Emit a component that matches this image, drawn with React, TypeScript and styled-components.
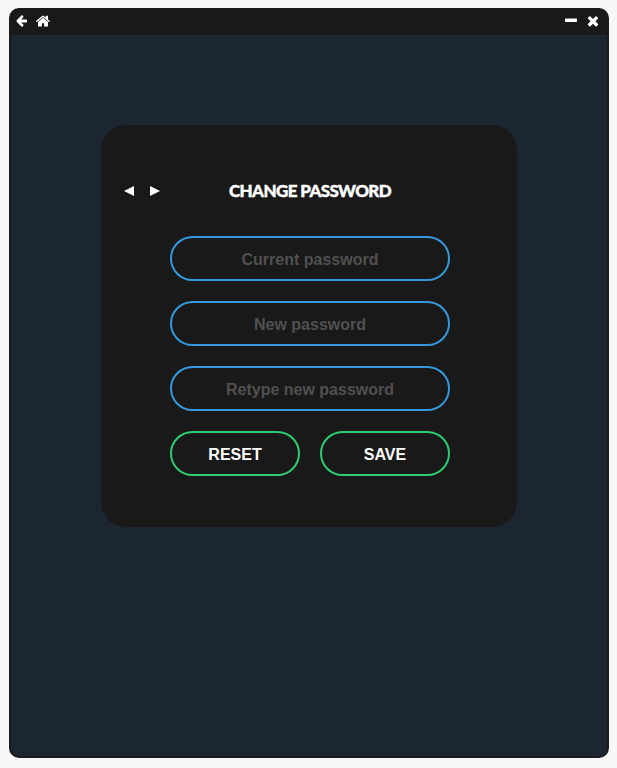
import React from 'react';
import styled, { createGlobalStyle } from 'styled-components';

const GlobalStyle = createGlobalStyle`
  * { box-sizing: border-box; }
  body { margin: 0; background: #f8f8f8; font-family: "Liberation Sans", Arial, sans-serif; }
`;

const Page = styled.div`
  height: 768px;
  padding: 8px 8px 10px 9px;
`;

const Window = styled.div`
  height: 750px;
  border: 2px solid #191919;
  border-radius: 10px;
  overflow: hidden;
  background: #1c2630;
`;

const TitleBar = styled.header`
  height: 25px;
  padding: 4px 8px 0 5px;
  display: flex;
  justify-content: space-between;
  background: #191919;
`;

const BarGroup = styled.div<{ $gap: number }>`
  display: flex;
  gap: ${(p) => p.$gap}px;
`;

const IconButton = styled.button`
  display: flex;
  height: 14px;
  padding: 0;
  border: 0;
  background: none;
  color: #fff;
  svg { display: block; fill: currentColor; }
`;

const Content = styled.main`
  display: flex;
  justify-content: center;
  padding-top: 90px;
`;

const Card = styled.form`
  width: 416px;
  height: 402px;
  padding-top: 52px;
  border-radius: 25px;
  background: #191919;
`;

const CardHeader = styled.div`
  display: flex;
  align-items: center;
  height: 28px;
  padding-left: 23px;
`;

const Arrows = styled.div`
  display: flex;
  gap: 16px;
  width: 105px;
`;

const Title = styled.h1`
  margin: 0;
  color: #fff;
  font: 900 17px/28px Lato, sans-serif;
  letter-spacing: -0.62px;
  -webkit-text-stroke: 0.4px #fff;
  white-space: nowrap;
`;

const Fields = styled.div`
  display: grid;
  grid-template-columns: 130px 130px;
  gap: 20px;
  margin: 31px 0 0 69px;
`;

const Field = styled.input`
  grid-column: span 2;
  height: 45px;
  padding: 2px 10px 0;
  border: 2px solid #3498db;
  border-radius: 24px;
  outline: none;
  background: none;
  color: #fff;
  font: bold 16px "Liberation Sans", Arial, sans-serif;
  text-align: center;
  &::placeholder { color: #505050; opacity: 1; }
`;

const ActionButton = styled.button`
  height: 45px;
  padding: 2px 0 0;
  border: 2px solid #2ecc71;
  border-radius: 24px;
  background: none;
  color: #fff;
  font: bold 16px "Liberation Sans", Arial, sans-serif;
`;

export default function App() {
  return (
    <>
      <GlobalStyle />
      <Page>
        <Window>
          <TitleBar>
            <BarGroup $gap={9}>
              <IconButton type="button" aria-label="Back">
                <svg width="11" height="14" viewBox="0 0 1536 1920" preserveAspectRatio="none">
                  <path d="M1536 896v128q0 53-32.5 90.5T1419 1152H715l293 294q38 36 38 90t-38 90l-75 76q-37 37-90 37-52 0-91-37L101 1050q-37-37-37-90 0-52 37-91l651-650q38-38 91-38 52 0 90 38l75 74q38 38 38 91t-38 91L715 768h704q52 0 84.5 37.5T1536 896z" />
                </svg>
              </IconButton>
              <IconButton type="button" aria-label="Home">
                <svg width="14" height="14" viewBox="90 60 1612 1640" preserveAspectRatio="none">
                  <path d="M1472 992v480q0 26-19 45t-45 19h-384v-384H768v384H384q-26 0-45-19t-19-45V992q0-1 .5-3t.5-3l575-474 575 474q1 2 1 6zm223-69l-62 74q-8 9-21 11h-3q-13 0-21-7L896 424l-692 577q-12 8-24 7-13-2-21-11l-62-74q-8-10-7-23.5t11-21.5l719-599q32-26 76-26t76 26l244 204V288q0-14 9-23t23-9h192q14 0 23 9t9 23v408l219 182q10 8 11 21.5t-7 23.5z" />
                </svg>
              </IconButton>
            </BarGroup>
            <BarGroup $gap={10}>
              <IconButton type="button" aria-label="Minimize">
                <svg width="12" height="14" viewBox="0 0 12 14">
                  <rect x="0" y="4.5" width="12" height="3.5" rx="0.7" />
                </svg>
              </IconButton>
              <IconButton type="button" aria-label="Close">
                <svg width="12" height="14" viewBox="0 0 12 14">
                  <path transform="translate(-1.75 -0.95) scale(0.0086)" d="M1490 1322q0 40-28 68l-136 136q-28 28-68 28t-68-28l-294-294-294 294q-28 28-68 28t-68-28l-136-136q-28-28-28-68t28-68l294-294-294-294q-28-28-28-68t28-68l136-136q28-28 68-28t68 28l294 294 294-294q28-28 68-28t68 28l136 136q28 28 28 68t-28 68l-294 294 294 294q28 28 28 68z" />
                </svg>
              </IconButton>
            </BarGroup>
          </TitleBar>
          <Content>
            <Card>
              <CardHeader>
                <Arrows>
                  <IconButton type="button" aria-label="Previous">
                    <svg width="10" height="14" viewBox="0 0 10 14"><path d="M10 2v10L0 7z" /></svg>
                  </IconButton>
                  <IconButton type="button" aria-label="Next">
                    <svg width="10" height="14" viewBox="0 0 10 14"><path d="M0 2v10l10-5z" /></svg>
                  </IconButton>
                </Arrows>
                <Title>CHANGE PASSWORD</Title>
              </CardHeader>
              <Fields>
                <Field placeholder="Current password" />
                <Field placeholder="New password" />
                <Field placeholder="Retype new password" />
                <ActionButton type="reset">RESET</ActionButton>
                <ActionButton type="button">SAVE</ActionButton>
              </Fields>
            </Card>
          </Content>
        </Window>
      </Page>
    </>
  );
}
